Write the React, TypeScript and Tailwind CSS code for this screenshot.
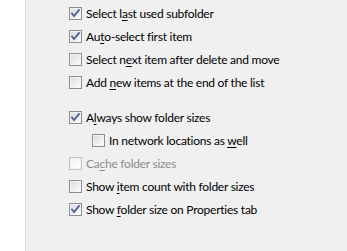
import React from "react";

type Opt = {
  label: string;
  key: number; // index of the access-key letter
  checked?: boolean;
  disabled?: boolean;
  indent?: boolean;
  gapBefore?: boolean;
};

const options: Opt[] = [
  { label: "Select last used subfolder", key: 8, checked: true },
  { label: "Auto-select first item", key: 2, checked: true },
  { label: "Select next item after delete and move", key: 8 },
  { label: "Add new items at the end of the list", key: 4 },
  { label: "Always show folder sizes", key: 1, checked: true, gapBefore: true },
  { label: "In network locations as well", key: 24, indent: true },
  { label: "Cache folder sizes", key: 2, disabled: true },
  { label: "Show item count with folder sizes", key: 5 },
  { label: "Show folder size on Properties tab", key: 5, checked: true },
];

function CheckBox({ checked, disabled }: { checked?: boolean; disabled?: boolean }) {
  const border = disabled ? "#c4c4c4" : "#8e8f8f";
  const id = disabled ? "cbd" : "cb";
  return (
    <svg width="13" height="13" viewBox="0 0 13 13" className="shrink-0">
      <defs>
        <linearGradient id={id} x1="0" y1="0" x2="1" y2="1">
          <stop offset="0" stopColor={disabled ? "#f4f4f4" : "#dcdcdc"} />
          <stop offset="1" stopColor="#fbfbfb" />
        </linearGradient>
      </defs>
      <rect x="0.5" y="0.5" width="12" height="12" fill="#f4f4f4" stroke={border} />
      <rect x="2" y="2" width="9" height="9" fill={`url(#${id})`} />
      {checked && (
        <path
          d="M3 6.5 L5 9 L10 3"
          fill="none"
          stroke="#4a5f97"
          strokeWidth="1.8"
          strokeLinecap="square"
        />
      )}
    </svg>
  );
}

function Label({ text, k }: { text: string; k: number }) {
  return (
    <span>
      {text.slice(0, k)}
      <u className="underline-offset-[2px]">{text[k]}</u>
      {text.slice(k + 1)}
    </span>
  );
}

export default function App() {
  return (
    <div
      className="flex w-[347px] h-[251px] bg-white text-[12px] tracking-[-0.25px] text-black"
      style={{ fontFamily: 'Lato, "Noto Sans", sans-serif' }}
    >
      <div className="w-[25px] shrink-0 bg-white" />
      <div className="flex-1 bg-[#f0f0f0] border-l border-[#dadada] pt-[2px] pl-[43px]">
        {options.map((o) => (
          <div
            key={o.label}
            className={`flex items-center gap-[4px] h-[23px] ${o.indent ? "pl-[23px]" : ""} ${
              o.gapBefore ? "mt-[12px]" : ""
            } ${o.disabled ? "text-[#8d8d8d]" : ""}`}
          >
            <CheckBox checked={o.checked} disabled={o.disabled} />
            <Label text={o.label} k={o.key} />
          </div>
        ))}
      </div>
    </div>
  );
}
